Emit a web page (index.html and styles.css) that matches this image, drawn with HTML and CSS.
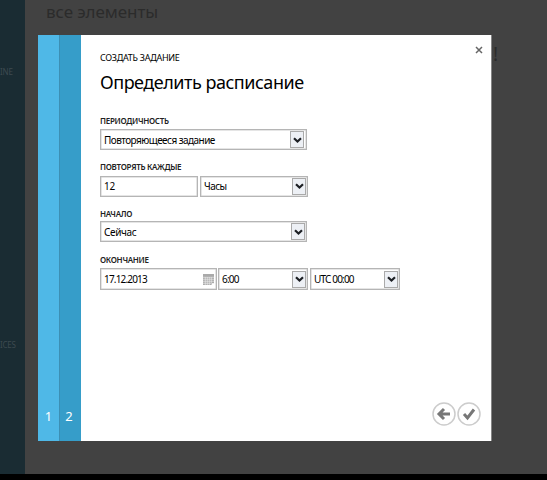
FILE: index.html
```
<!DOCTYPE html>
<html lang="ru">
<head>
<meta charset="utf-8">
<title>Создать задание</title>
<link rel="stylesheet" href="styles.css">
</head>
<body>
<div class="page">
  <nav class="sidebar"><span class="nav-online">INE</span><span class="nav-services">ICES</span></nav>
  <main class="backdrop"><h2 class="page-title">все элементы</h2><span class="alert">!</span></main>
</div>
<section class="dialog">
  <div class="step step-one">1</div>
  <div class="step step-two">2</div>
  <div class="content">
    <header class="header">
      <div>
        <div class="eyebrow">СОЗДАТЬ ЗАДАНИЕ</div>
        <h1 class="title">Определить расписание</h1>
      </div>
      <svg class="close" width="8" height="8" viewBox="0 0 8 8"><path d="M1 1l6 6M7 1l-6 6"/></svg>
    </header>
    <div class="group recurrence">
      <div class="label">ПЕРИОДИЧНОСТЬ</div>
      <div class="row"><div class="field wide"><span class="value">Повторяющееся задание</span><span class="drop"><svg width="9" height="7" viewBox="0 0 9 7"><path d="M1 1.2l3.5 3.3L8 1.2"/></svg></span></div></div>
    </div>
    <div class="group every">
      <div class="label">ПОВТОРЯТЬ КАЖДЫЕ</div>
      <div class="row"><div class="field count"><span class="value">12</span></div><div class="field unit"><span class="value">Часы</span><span class="drop"><svg width="9" height="7" viewBox="0 0 9 7"><path d="M1 1.2l3.5 3.3L8 1.2"/></svg></span></div></div>
    </div>
    <div class="group start">
      <div class="label">НАЧАЛО</div>
      <div class="row"><div class="field wide"><span class="value now">Сейчас</span><span class="drop"><svg width="9" height="7" viewBox="0 0 9 7"><path d="M1 1.2l3.5 3.3L8 1.2"/></svg></span></div></div>
    </div>
    <div class="group end">
      <div class="label">ОКОНЧАНИЕ</div>
      <div class="row">
        <div class="field date"><span class="value">17.12.2013</span><svg class="calendar" width="11" height="11" viewBox="0 0 11 11"><path fill="#aaa" d="M0 0h11v11H0z"/><path stroke="#eee" stroke-width=".6" d="M0 3.3h11M0 5.3h11M0 7.3h11M0 9.3h8M2.3 3v8M4.3 3v8M6.3 3v8M8.3 3v6"/><path fill="#fff" d="M8.6 9.2H11V11H8.6z"/></svg></div>
        <div class="field time"><span class="value">6:00</span><span class="drop"><svg width="9" height="7" viewBox="0 0 9 7"><path d="M1 1.2l3.5 3.3L8 1.2"/></svg></span></div>
        <div class="field zone"><span class="value">UTC 00:00</span><span class="drop"><svg width="9" height="7" viewBox="0 0 9 7"><path d="M1 1.2l3.5 3.3L8 1.2"/></svg></span></div>
      </div>
    </div>
    <footer class="actions">
      <svg width="24" height="24" viewBox="0 0 24 24"><circle cx="12" cy="12" r="11"/><path class="glyph" d="M18 12H8M12 7l-5 5 5 5"/></svg>
      <svg width="24" height="24" viewBox="0 0 24 24"><circle cx="12" cy="12" r="11"/><path class="glyph" d="M7 12l3.5 4L17 7.5"/></svg>
    </footer>
  </div>
</section>
</body>
</html>
```
FILE: styles.css
```
* { box-sizing: border-box; }
body { margin: 0; width: 547px; height: 480px; overflow: hidden; background: #000; color: #000; font-family: "Noto Sans", "Open Sans", sans-serif; }
.page { display: flex; height: 474px; background: #424242; }
.sidebar { width: 25px; display: flex; flex-direction: column; background: #1a2c33; color: #3d4a50; font-size: 8px; line-height: 10px; letter-spacing: -0.2px; overflow: hidden; }
.nav-online { margin-top: 67px; }
.nav-services { margin: 263px 0 0 0; }
.backdrop { flex: 1; display: flex; color: #2b2b2b; }
.page-title { margin: 0 0 0 21px; width: 420px; font-size: 17px; font-weight: 400; line-height: 24px; letter-spacing: -0.08px; }
.alert { margin: 42px 0 0 27px; font-size: 19px; line-height: 24px; }
.dialog { position: absolute; left: 38px; top: 35px; width: 454px; height: 406px; display: flex; background: #fff; border-right: 1px solid #858585; }
.step { display: flex; justify-content: center; align-items: flex-end; padding-bottom: 16px; color: #fff; font-size: 13px; line-height: 18px; }
.step-one { width: 21px; background: #4fb8e7; }
.step-two { width: 22px; padding-right: 3px; background: #369dc9; border-left: 1px solid #3c8fb4; }
.content { flex: 1; display: flex; flex-direction: column; padding-left: 19px; }
.header { display: flex; justify-content: space-between; height: 80px; padding: 16px 8px 0 0; }
.eyebrow { font-size: 9px; line-height: 14px; letter-spacing: -0.28px; white-space: nowrap; }
.title { margin: 4px 0 0; font-size: 18px; font-weight: 400; line-height: 26px; letter-spacing: -0.48px; white-space: nowrap; }
.close { margin-top: -5px; fill: none; stroke: #666; stroke-width: 1.5; }
.label { font-size: 8px; line-height: 12px; font-weight: 600; letter-spacing: -0.3px; white-space: nowrap; color: #222; }
.group { height: 46px; }
.row { display: flex; gap: 2px; margin-top: 2px; }
.every { height: 47px; }
.every .row { margin-top: 3px; }
.every .value { position: relative; top: -1px; }
.start .row { margin-top: 1px; }
.field { display: flex; align-items: center; justify-content: space-between; height: 21px; padding: 0 1px 0 3px; border: 1px solid #b5b5b5; box-shadow: inset 0 0 0 .5px #ccc; font-size: 10px; letter-spacing: -0.54px; white-space: nowrap; }
.now { letter-spacing: -0.35px; }
.wide { width: 207px; }
.recurrence .field { padding-right: 2px; }
.count { width: 98px; letter-spacing: -0.3px; }
.unit { width: 108px; }
.end .field { height: 22px; letter-spacing: -0.82px; }
.end .date { width: 117px; padding-right: 2px; }
.time { width: 90px; margin-left: -1px; }
.zone { width: 90px; }
.drop { display: flex; align-items: center; justify-content: center; width: 14px; height: 17px; border: 1px solid #aaa; background: #edf0f5; }
.every .drop svg { margin-top: -1px; }
.drop svg { flex: none; margin-top: 1px; fill: none; stroke: #1c1f24; stroke-width: 2.2; }
.actions { display: flex; gap: 1px; margin: auto 10px 15px auto; }
.actions svg { fill: none; stroke: #ccc; stroke-width: 1.5; }
.actions .glyph { stroke: #777; stroke-width: 3; }
```
